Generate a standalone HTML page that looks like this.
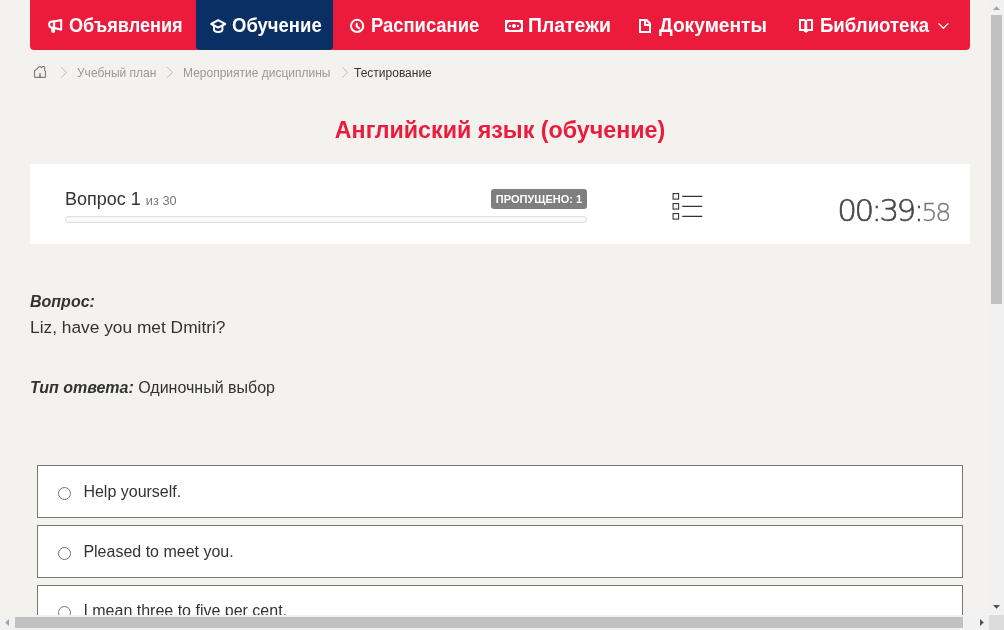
<!DOCTYPE html>
<html lang="ru">
<head>
<meta charset="utf-8">
<title>Тестирование</title>
<style>
*{box-sizing:border-box;margin:0;padding:0}
html,body{width:1004px;height:630px;overflow:hidden;background:#f3f2ee;font-family:"Liberation Sans",sans-serif;color:#333}
#page{will-change:transform;position:absolute;left:0;top:0;width:989px;height:615px;overflow:hidden}
.nav{position:absolute;left:30px;top:0;width:940px;height:50px;background:#ec1b3c;border-radius:0 0 4px 4px}
.nav a{position:absolute;top:0;height:50px;color:#fff;font-family:"Liberation Sans",sans-serif;font-weight:bold;font-size:19.5px;line-height:50px;white-space:nowrap;text-decoration:none}
.nav a.act{background:#0a2f65;border-radius:0 0 4px 4px}
.nav .t{position:absolute;top:0;transform-origin:0 50%}
.nav .ico{position:absolute;left:0;top:0}
.nav svg{position:absolute}
.bc{position:absolute;top:66px;left:0;font-size:12px;line-height:14px;color:#999}
.bc span{position:absolute;top:0;white-space:nowrap}
.bc svg{position:absolute}
h1{position:absolute;left:30px;width:940px;top:113px;text-align:center;color:#ec1b3c;font-size:24.3px;line-height:34px;font-weight:bold;font-family:"Liberation Sans",sans-serif;transform:scaleX(.957);white-space:nowrap}
.panel{position:absolute;left:30px;top:164px;width:940px;height:80px;background:#fff}
.qn{position:absolute;left:35px;top:24px;font-size:18px;line-height:22px;color:#333;white-space:nowrap}
.qn small{font-size:12.8px;color:#777}
.badge{position:absolute;left:461px;top:25px;width:96px;height:20px;background:#7f7f7f;border-radius:3px;color:#fff;font-weight:bold;font-size:11px;line-height:20px;text-align:center;white-space:nowrap}
.prog{position:absolute;left:35px;top:52px;width:522px;height:7px;border-radius:4px;background:#f9f9f9;border:1px solid #ddd}
.timer{position:absolute;right:21px;top:25.5px;-webkit-text-stroke:.55px #464646;font-family:"DejaVu Sans",sans-serif;font-weight:200;font-size:31px;line-height:40px;color:#464646;white-space:nowrap;letter-spacing:-2.6px}
.timer small{font-size:25.4px;color:#7a7a7a;letter-spacing:-2.4px;-webkit-text-stroke:.35px #7a7a7a}
.q{position:absolute;left:30px;white-space:nowrap}
.ans{position:absolute;left:37px;width:926px;height:53px;border:1px solid #767676;background:#fff}
.ans i{position:absolute;left:20px;top:21px;width:13px;height:13px;border:1px solid #767676;border-radius:50%;background:#fff}
.ans span{position:absolute;left:45.4px;top:16px;font-size:16px;line-height:20px;white-space:nowrap}
.vsb{position:absolute;left:989px;top:0;width:15px;height:615px;background:#f1f1f1}
.vsb b{position:absolute;left:2px;top:15px;width:11px;height:289px;background:#c1c1c1}
.hsb{position:absolute;left:0;top:615px;width:989px;height:15px;background:#f1f1f1}
.hsb b{position:absolute;left:15px;top:2px;width:948px;height:11px;background:#c1c1c1}
.corner{position:absolute;left:989px;top:615px;width:15px;height:15px;background:#dcdcdc}
.arr{position:absolute;width:0;height:0;border:4px solid transparent}
</style>
</head>
<body>
<div id="page">
<div class="nav">
<a class="act" style="left:166px;width:137px"></a>
<a><span class="t" style="left:38.5px;transform:scaleX(.928)">Объявления</span></a>
<a><span class="t" style="left:201.7px;transform:scaleX(.948)">Обучение</span></a>
<a><span class="t" style="left:340.7px;transform:scaleX(.943)">Расписание</span></a>
<a><span class="t" style="left:498px;transform:scaleX(.996)">Платежи</span></a>
<a><span class="t" style="left:629.3px;transform:scaleX(.984)">Документы</span></a>
<a><span class="t" style="left:790.2px;transform:scaleX(.954)">Библиотека</span></a>
<svg class="ico" width="940" height="50" viewBox="30 0 940 50" fill="none" stroke="#fff" stroke-width="2" stroke-linejoin="round" stroke-linecap="round">
<!-- megaphone -->
<path d="M54 21.5H52.2a3.1 3.1 0 0 0 0 6.2H54M54 21.5L61.2 19.9V29.8L54 27.7Z"/>
<path d="M54 21.5V27.7" stroke-width="2.3"/>
<path d="M51.2 27.5H55.2V31a2 2 0 0 1-4 0Z" fill="#fff" stroke="none"/>
<!-- graduation cap -->
<path d="M211.2 24L218.2 20.2L225.2 24L218.2 27.6Z"/>
<path d="M214 26V29.6Q214 32 218.2 32Q222.4 32 222.4 29.6V26"/>
<!-- clock -->
<circle cx="357.1" cy="25.9" r="6.1"/>
<path d="M356.7 23.8V26.4L359.3 28.4"/>
<!-- money -->
<path fill="#fff" stroke="none" fill-rule="evenodd" d="M505 20H523V32H505ZM509 22L507 24V28L509 30H519L521 28V24L519 22ZM509 25H511V27H509ZM517 25H519V27H517ZM514 24A2 2 0 1 0 514 28A2 2 0 1 0 514 24Z"/>
<!-- document -->
<path fill="#fff" stroke="none" fill-rule="evenodd" d="M639 19H647L651 23V33H639ZM641 21V31H649V26H644V21ZM646 21.2V24H648.8Z"/>
<!-- book -->
<path fill="#fff" stroke="none" fill-rule="evenodd" d="M799 19H804Q806 19.3 806 20.3Q806 19.3 808 19H813V31H808.5L806 33L803.5 31H799ZM801 21V29H804.4V21ZM807.2 21V29H811V21Z"/>
<!-- chevron -->
<path d="M938.8 23.6L943.4 28.2L948 23.6" stroke-width="1.3"/>
</svg>
</div>
<div class="bc">
<svg width="400" height="24" viewBox="0 60 400 24" style="left:0;top:-6px" fill="none" stroke="#7d7d7d" stroke-width="1.1" stroke-linejoin="round" stroke-linecap="round">
<path d="M34.5 71.2L39.4 66.5H40.3L41.4 67.6L42.6 66.5H44.2Q44.6 66.5 44.6 66.9V70.4L45.5 71.3V76.4Q45.5 77.4 44.5 77.4H35.5Q34.5 77.4 34.5 76.4Z"/>
<path d="M40 73.2V77.2" stroke-width="1.6" stroke-linecap="butt"/>
<g stroke="#bdbdbd" stroke-width="1">
<path d="M61.5 67.5L66.6 72.4L61.5 77.3"/>
<path d="M167.5 67.5L172.6 72.4L167.5 77.3"/>
<path d="M342.5 67.5L347.6 72.4L342.5 77.3"/>
</g>
</svg>
<span style="left:77px">Учебный план</span>
<span style="left:183px">Мероприятие дисциплины</span>
<span style="left:354px;color:#333">Тестирование</span>
</div>
<h1>Английский язык (обучение)</h1>
<div class="panel">
<div class="qn">Вопрос 1 <small>из 30</small></div>
<div class="badge">ПРОПУЩЕНО: 1</div>
<div class="prog"></div>
<svg style="position:absolute;left:640px;top:26px" width="36" height="32" viewBox="670 190 36 32" fill="none" stroke="#333" stroke-width="1.1">
<rect x="673.1" y="193.6" width="5.5" height="5.5"/><rect x="673.1" y="203.6" width="5.5" height="5.5"/><rect x="673.1" y="213.6" width="5.5" height="5.5"/>
<path d="M682.2 196.3H702.2M682.2 206.3H702.2M682.2 216.3H702.2" stroke-width="1.3"/>
</svg>
<div class="timer">00:39:<small>58</small></div>
</div>
<div class="q" style="top:292px;font-size:16px;line-height:20px;font-weight:bold;font-style:italic">Вопрос:</div>
<div class="q" style="top:317px;font-size:13pt;line-height:20px">Liz, have you met Dmitri?</div>
<div class="q" style="top:378px;font-size:16px;line-height:20px"><b style="font-style:italic">Тип ответа:</b> Одиночный выбор</div>
<div class="ans" style="top:465px"><i></i><span>Help yourself.</span></div>
<div class="ans" style="top:525px"><i></i><span>Pleased to meet you.</span></div>
<div class="ans" style="top:585px"><i style="top:20px"></i><span style="top:15px">I mean three to five per cent.</span></div>
</div>
<div class="vsb"><b></b>
<svg width="15" height="615" viewBox="0 0 15 615" style="position:absolute;left:0;top:0"><path d="M4 10L7.5 6.2L11 10Z" fill="#a3a3a3"/><path d="M4 605L11 605L7.5 608.8Z" fill="#505050"/></svg>
</div>
<div class="hsb"><b></b>
<svg width="989" height="15" viewBox="0 0 989 15" style="position:absolute;left:0;top:0"><path d="M9 4L9 11L5.2 7.5Z" fill="#a3a3a3"/><path d="M980 4L980 11L983.8 7.5Z" fill="#505050"/></svg>
</div>
<div class="corner"></div>
</body>
</html>
